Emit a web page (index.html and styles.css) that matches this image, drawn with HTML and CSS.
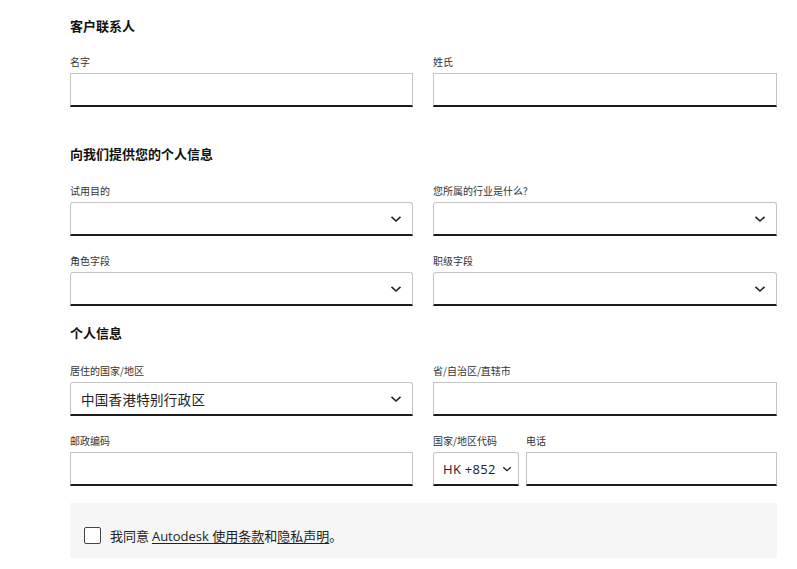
FILE: index.html
```html
<!DOCTYPE html>
<html lang="zh-CN">
<head>
<meta charset="utf-8">
<title>表单</title>
<link rel="stylesheet" href="styles.css">
</head>
<body>
<div class="page">
  <h2 class="heading">客户联系人</h2>
  <div class="row">
    <div class="field">
      <label class="label">名字</label>
      <div class="input"></div>
    </div>
    <div class="field">
      <label class="label">姓氏</label>
      <div class="input"></div>
    </div>
  </div>

  <h2 class="heading heading-gap">向我们提供您的个人信息</h2>
  <div class="row">
    <div class="field">
      <label class="label">试用目的</label>
      <div class="input select"><svg class="chev" viewBox="0 0 12 8"><path d="M1.5 1.8 L6 6 L10.5 1.8"/></svg></div>
    </div>
    <div class="field">
      <label class="label">您所属的行业是什么?</label>
      <div class="input select"><svg class="chev" viewBox="0 0 12 8"><path d="M1.5 1.8 L6 6 L10.5 1.8"/></svg></div>
    </div>
  </div>
  <div class="row row-next">
    <div class="field">
      <label class="label">角色字段</label>
      <div class="input select"><svg class="chev" viewBox="0 0 12 8"><path d="M1.5 1.8 L6 6 L10.5 1.8"/></svg></div>
    </div>
    <div class="field">
      <label class="label">职级字段</label>
      <div class="input select"><svg class="chev" viewBox="0 0 12 8"><path d="M1.5 1.8 L6 6 L10.5 1.8"/></svg></div>
    </div>
  </div>

  <h2 class="heading heading-gap-sm">个人信息</h2>
  <div class="row">
    <div class="field">
      <label class="label">居住的国家/地区</label>
      <div class="input select"><span class="value">中国香港特别行政区</span><svg class="chev" viewBox="0 0 12 8"><path d="M1.5 1.8 L6 6 L10.5 1.8"/></svg></div>
    </div>
    <div class="field">
      <label class="label">省/自治区/直辖市</label>
      <div class="input"></div>
    </div>
  </div>
  <div class="row row-next">
    <div class="field">
      <label class="label">邮政编码</label>
      <div class="input"></div>
    </div>
    <div class="phone">
      <div class="field code">
        <label class="label">国家/地区代码</label>
        <div class="input select code-select"><span class="value latin">HK +852</span><svg class="chev" viewBox="0 0 12 8"><path d="M1.5 1.8 L6 6 L10.5 1.8"/></svg></div>
      </div>
      <div class="field tel">
        <label class="label">电话</label>
        <div class="input"></div>
      </div>
    </div>
  </div>

  <div class="consent">
    <span class="checkbox"></span>
    <span class="consent-text">我同意 <a class="link">Autodesk 使用条款</a>和<a class="link">隐私声明</a>。</span>
  </div>
</div>
</body>
</html>
```
FILE: styles.css
```css
html, body {
  margin: 0;
  padding: 0;
  background: #ffffff;
}
body {
  font-family: "Noto Sans CJK SC", "Noto Sans", sans-serif;
  color: #1a1a1a;
}
.page {
  width: 707px;
  padding: 17px 0 0 70px;
}
.heading {
  margin: 0 0 20px 0;
  font-size: 13px;
  line-height: 18px;
  font-weight: 700;
  color: #111;
}
.heading-gap {
  margin-top: 38px;
  margin-bottom: 21px;
}
.heading-gap-sm {
  margin-top: 18px;
  margin-bottom: 22px;
}
.row {
  display: grid;
  grid-template-columns: 343px 344px;
  column-gap: 20px;
}
.row-next {
  margin-top: 18px;
}
.field {
  display: flex;
  flex-direction: column;
  min-width: 0;
}
.label {
  font-size: 10px;
  line-height: 14px;
  margin-bottom: 4px;
  color: #333;
  white-space: nowrap;
}
.input {
  box-sizing: border-box;
  height: 34px;
  border: 1px solid #c4c4c4;
  border-bottom: 2px solid #1c1c1c;
  background: #fff;
  display: flex;
  align-items: center;
  padding: 0 10px;
}
.select {
  border-radius: 3px 3px 0 0;
  justify-content: space-between;
}
.select .chev {
  margin-left: auto;
  width: 12px;
  height: 8px;
  flex: none;
  fill: none;
  stroke: #222;
  stroke-width: 1.6;
}
.value {
  font-size: 13.5px;
  color: #222;
  letter-spacing: 0.3px;
  white-space: nowrap;
}
.latin {
  font-family: "Open Sans", "Noto Sans", sans-serif;
  font-size: 13px;
  letter-spacing: 0.3px;
}
.phone {
  display: flex;
  gap: 7px;
}
.code {
  width: 86px;
  flex: none;
}
.code-select {
  padding: 0 6px 0 9px;
}
.code-select .chev {
  width: 10px;
  margin-left: 4px;
}
.tel {
  flex: 1;
}
.consent {
  margin-top: 17px;
  background: #f6f6f6;
  height: 55px;
  box-sizing: border-box;
  padding: 24px 0 0 14px;
  display: flex;
  align-items: flex-start;
}
.checkbox {
  box-sizing: border-box;
  width: 17px;
  height: 17px;
  border: 1.5px solid #444;
  border-radius: 2px;
  background: #fff;
  flex: none;
}
.consent-text {
  margin-left: 9px;
  font-size: 13px;
  line-height: 17px;
  color: #222;
}
.link {
  font-family: "Open Sans", "Noto Sans CJK SC", sans-serif;
  text-decoration: underline;
  text-underline-offset: 2px;
  color: #222;
}
```
